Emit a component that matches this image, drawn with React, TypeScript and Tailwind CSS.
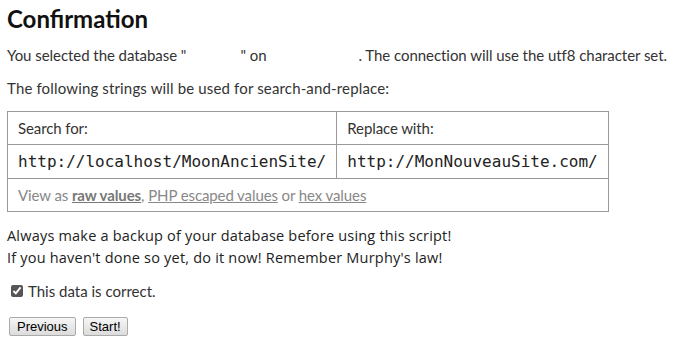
export default function App() {
  const sans = { fontFamily: 'Lato, "Noto Sans", sans-serif' };
  return (
    <div className="w-[694px] h-[357px] bg-white pl-[7px] pt-[4px] text-[#333]" style={sans}>
      <h1 className="text-[24px] leading-[30px] font-bold text-[#111]">Confirmation</h1>

      <p className="mt-[10px] whitespace-nowrap text-[15px] leading-[22px] tracking-[-0.05px]">
        You selected the database "<span className="inline-block w-[54px]" />" on
        <span className="inline-block w-[92px]" />. The connection will use the utf8 character set.
      </p>
      <p className="mt-[11px] whitespace-nowrap text-[15px] leading-[22px] tracking-[0.15px]">
        The following strings will be used for search-and-replace:
      </p>

      <table className="mt-[12px] w-[599px] border-collapse border border-[#999] text-[15px] tracking-[-0.1px]">
        <tbody>
          <tr className="h-[33px]">
            <td className="w-[328px] border border-[#999] px-[10px]">Search for:</td>
            <td className="border border-[#999] px-[10px]">Replace with:</td>
          </tr>
          <tr className="h-[34px]" style={{ fontFamily: '"DejaVu Sans Mono", monospace' }}>
            <td className="border border-[#999] px-[10px] text-[16px] tracking-normal text-[#222]">http://localhost/MoonAncienSite/</td>
            <td className="border border-[#999] px-[10px] text-[16px] tracking-normal text-[#222]">http://MonNouveauSite.com/</td>
          </tr>
          <tr className="h-[33px]">
            <td colSpan={2} className="border border-[#999] px-[10px] text-[#888]">
              View as <a className="underline font-bold text-[#777]">raw values</a>,{' '}
              <a className="underline">PHP escaped values</a> or <a className="underline">hex values</a>
            </td>
          </tr>
        </tbody>
      </table>

      <div className="mt-[13px] text-[14.5px] leading-[22px] tracking-[0.2px] text-[#222]" style={{ fontFamily: '"Open Sans", sans-serif' }}>
        <p>Always make a backup of your database before using this script!</p>
        <p>If you haven't done so yet, do it now! Remember Murphy's law!</p>
      </div>

      <label className="mt-[11px] flex items-center gap-[5px] text-[15px] leading-[22px]">
        <input type="checkbox" defaultChecked className="ml-[4px] w-[12px] h-[12px] accent-[#555]" />
        <span>This data is correct.</span>
      </label>

      <div className="mt-[15px] flex gap-[7px] pl-[2px]" style={{ fontFamily: '"Liberation Sans", Arial, sans-serif' }}>
        <button className="h-[19px] px-[7px] text-[13px] leading-none text-black border border-[#aaa] rounded-[2px] bg-gradient-to-b from-[#f6f6f6] to-[#dcdcdc]">
          Previous
        </button>
        <button className="h-[19px] px-[6px] text-[13px] leading-none text-black border border-[#aaa] rounded-[2px] bg-gradient-to-b from-[#f6f6f6] to-[#dcdcdc]">
          Start!
        </button>
      </div>
    </div>
  );
}
